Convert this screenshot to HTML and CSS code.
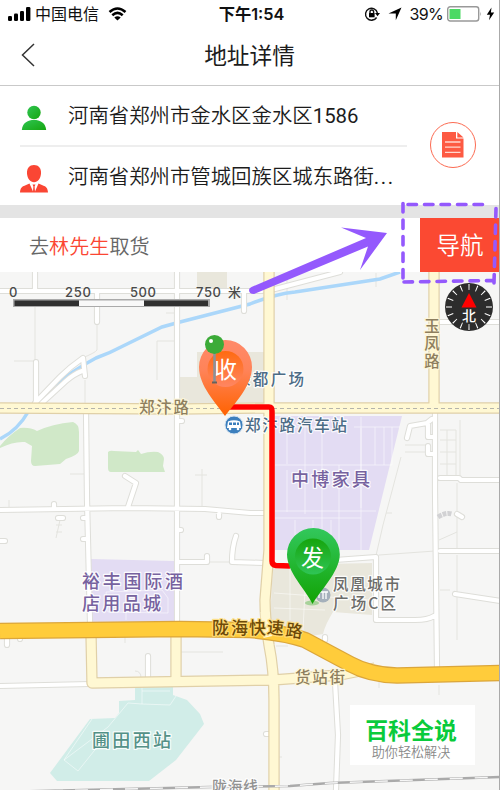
FILE: index.html
```html
<!DOCTYPE html>
<html lang="zh-CN">
<head>
    <meta charset="UTF-8">
    <meta name="viewport" content="width=device-width, initial-scale=1.0">
    <title>地址详情</title>
    <link rel="stylesheet" href="styles.css">
</head>
<body>
    <div class="page">
        <div class="status-bar">
            <div class="status-left">
                <svg class="signal" width="23" height="14" viewBox="0 0 23 14">
                    <rect x="0" y="9" width="4" height="5" rx="1.3"/>
                    <rect x="6" y="6.500" width="4" height="7.500" rx="1.300"/>
                    <rect x="12" y="4" width="4" height="10" rx="1.300"/>
                    <rect x="18" y="0" width="4.400" height="14" rx="1.300"/>
                </svg>
                <span class="carrier">中国电信</span>
                <svg class="wifi" width="19" height="14" viewBox="0 0 19 14">
                    <path d="M1.500 5Q9.500-2 17.500 5M4.300 8.200Q9.500 3.700 14.700 8.200"/>
                    <path class="wifi-dot" d="M6.300 10.400Q9.500 7.900 12.700 10.400L9.500 13.600Z"/>
                </svg>
            </div>
            <div class="status-time">下午1:54</div>
            <div class="status-right">
                <svg width="17" height="16" viewBox="0 0 17 16">
                    <path class="lock-ring" d="M12.600 11.500A6 6 0 1 1 13.400 7M8 14A6 6 0 0 0 11 13"/>
                    <path d="M11 7h5l-2.500 3.200z"/>
                    <rect x="5" y="7" width="5.600" height="4.300"/>
                    <path class="lock-ring" d="M6 7.500V5.800a1.800 1.800 0 0 1 3.600 0V7.500"/>
                </svg>
                <svg class="location" width="14" height="14" viewBox="0 0 14 14">
                    <path d="M13.500.5L7.800 13.200V6.500H.5Z"/>
                </svg>
                <span class="percent">39%</span>
                <svg class="battery" width="36" height="16" viewBox="0 0 36 16">
                    <rect class="battery-case" x=".7" y=".7" width="31" height="14.300" rx="2.500"/>
                    <rect class="battery-level" x="2.500" y="3" width="11" height="10"/>
                    <path class="battery-tip" d="M33.300 5.500q1.500 2.300 0 4.800z"/>
                </svg>
                <svg class="bolt" width="9" height="14" viewBox="0 0 9 14">
                    <path d="M5.500.5L.8 7.800H4L3 13.300L8.200 5.600H4.900Z"/>
                </svg>
            </div>
        </div>

        <div class="navbar">
            <svg class="back" width="14" height="24" viewBox="0 0 14 24">
                <path d="M13 1L1.500 12L13 23"/>
            </svg>
            <h1 class="navbar-title">地址详情</h1>
        </div>

        <div class="address">
            <div class="address-list">
                <div class="address-row">
                    <svg class="person" width="28" height="28" viewBox="0 0 28 28">
                        <defs>
                            <linearGradient id="personGreen" x1="0" y1="0" x2="1" y2="1">
                                <stop offset="0" stop-color="#2fc552"/>
                                <stop offset="1" stop-color="#16a610"/>
                            </linearGradient>
                        </defs>
                        <circle cx="14" cy="8.500" r="6.700" fill="url(#personGreen)"/>
                        <path d="M1.800 26C2.500 18.500 8 16 14 16S25.500 18.500 26.200 26Z" fill="url(#personGreen)"/>
                    </svg>
                    <span class="address-text">河南省郑州市金水区金水区<span class="digits">1586</span></span>
                </div>
                <div class="address-row">
                    <svg class="person" width="28" height="28" viewBox="0 0 28 28">
                        <path class="red" d="M14 0C18.500 0 21.300 3 21 8.500C20.700 13.500 17.800 17.200 14 17.200S7.300 13.500 7 8.500C6.700 3 9.500 0 14 0Z"/>
                        <path class="red" d="M0 27.500C.3 23 2 21.300 5 20.400L9.500 18.500L13 26.500L13.400 21.500L12.500 19.500H15.500L14.600 21.500L15 26.500L18.500 18.500L23 20.400C26 21.300 27.700 23 28 27.500Z"/>
                    </svg>
                    <span class="address-text">河南省郑州市管城回族区城东路街<span class="dots">...</span></span>
                </div>
            </div>
            <div class="order-button">
                <svg width="22" height="26" viewBox="0 0 22 26">
                    <path class="sheet" d="M0 0H14V6.500H21.500V25.500H0Z"/>
                    <path class="sheet" d="M15.300 0L21.500 5.500H15.300Z"/>
                    <path class="sheet-lines" d="M3 10H18.500M3 15.200H18.500M3 20.400H18.500"/>
                </svg>
            </div>
        </div>

        <div class="task">
            <p class="task-text">去<span class="task-name">林先生</span>取货</p>
            <div class="nav-button">导航</div>
        </div>

        <div class="map">
            <svg class="map-canvas" width="500" height="518" viewBox="0 272 500 518">
                <defs>
                    <path id="lanes" d="M0 291H262M35 272V291M97 291V322M177 272V622M36 362V402M35 403L60 377Q70 367 83 358L85 376M42 403L66 381Q74 374 82 371M244 292V311M86 410L87 500L90 622M0 510L128 508L205 509L250 513H266M54 509V504M125 476L136 483L128 507M0 541H5M58 518H63M83 518H87M83 539H87M178 421H182M178 530H181M178 562H207V556M236 536Q232 547 232 562L265 563M219 514V517M435 413V490L437 668M440 478L459 478L461 480H500M440 551H500M407 438L410 426L427 423L432 419M428 424V437H433M428 446V454H434M455 594L500 601M335 560L376 557V620H415Q428 620 434 616M148 656V680M335 682L338 735L336 790M440 322H500M7 637V645M20 637V639M325 640V637M266 734H275M0 686L90 684M275 289L340 272"/>
                    <path id="yellow" d="M269 272V550L265 600Q265 620 269 645Q274 670 274 700V790M434 272V405M0 408L180 409L265 408H500M91 634L92 683L273 680L340 675L375 668M176 632V681"/>
                    <path id="highway" d="M0 631L180 629L250 630Q285 633 305 640L350 664Q370 675 397 675.500L500 673"/>
                    <linearGradient id="pinOrange" x1="0" y1="0" x2="0" y2="1">
                        <stop offset="0" stop-color="#ff8a6a"/>
                        <stop offset=".4" stop-color="#ff8358"/>
                        <stop offset="1" stop-color="#ff6200"/>
                    </linearGradient>
                    <linearGradient id="pinOrangeInner" x1="0" y1="0" x2="0" y2="1">
                        <stop offset="0" stop-color="#ff6a10"/>
                        <stop offset="1" stop-color="#ff8663"/>
                    </linearGradient>
                    <linearGradient id="pinGreen" x1="0" y1="0" x2="0" y2="1">
                        <stop offset="0" stop-color="#32c85c"/>
                        <stop offset="1" stop-color="#12a304"/>
                    </linearGradient>
                    <linearGradient id="pinGreenInner" x1="0" y1="0" x2="0" y2="1">
                        <stop offset="0" stop-color="#16a40c"/>
                        <stop offset="1" stop-color="#2fc556"/>
                    </linearGradient>
                </defs>

                <rect class="land" y="272" width="500" height="518"/>

                <!-- blocks -->
                <path class="block" d="M197 272H227V288H197ZM197 352H264V404H180V377H197ZM273 565L372 563V615L333 612Q325 625 323 634L305 637L270 620Z"/>
                <path class="park" d="M0 446Q8 436 20 428Q30 427 37 431Q52 424 73 422Q79 424 79 432V451Q78 455 66 459L60 464L35 466Q31 466 31 461L32 446L25 442Q14 441 0 448ZM108 452Q110 450 114 451L136 452L138 450L141 454Q150 451 158 452Q164 455 164 459L163 466L165 472H111Q108 472 108 468Z"/>
                <path class="mall" d="M275 416H402L369 550H275ZM91 559L174 561V622H92Z"/>
                <path class="station" d="M135 686H173V695L187 700L200 714L204 724L176 760L149 781H57L50 773L90 719L115 718L119 713V701L135 700Z"/>

                <!-- small lanes and block outlines -->
                <path class="mall-lines" d="M275 427H325M354 427H400M275 465H392M275 511H376M288 518H361M275 518L288 518M287 417V464M305 417V514M322 417V550M339 465V550M361 417V508M375 427V465M384 427V465M392 427V465M361 428V550M287 470V512M295 520V550M313 520V550M331 520V550M106 592L162 590L168 598V613L108 612ZM126 595V620M142 686V704L170 705L176 696M142 691H170M142 704L128 703L108 727L64 760L78 771L102 741M64 760L92 719M274 593L370 600M274 608L325 610M306 570L303 630M290 567V620"/>
                <path class="thin" d="M35 300V360M14 361H34M97 325V350Q95 353 82 358M157 341H177M157 341V380M85 380V405M70 474H84M202 469V507M195 475H207M60 520L56 538M56 525H62M56 532H62M9 500V509M401 457L383 525L375 560M379 555L435 551M405 452H430M405 445H430M440 430H456V476M447 430V476M440 440H456M440 452H456M440 464H456M460 420V478M457 483V551M439 540L457 532M457 555V640M440 590H450M181 652H223M135 671Q141 671 141 678M125 634V643M287 276V300M376 273V287M166 313H176M209 562H232M386 513H392M439 685V695M379 677V688M282 757H278M276 646H288"/>

                <path class="river" d="M0 439Q18 430 28 412L48 390Q75 369 96 358Q110 353 121 347L162 327L180 322L250 304Q275 294 295 292L380 279L400 272"/>

                <!-- roads: edge first, then surface -->
                <use href="#lanes" class="lane-edge"/>
                <use href="#lanes" class="lane"/>
                <use href="#yellow" class="yellow-edge"/>
                <use href="#yellow" class="yellow-road"/>
                <path class="yellow-dash" d="M0 408.500H500"/>
                <use href="#highway" class="highway-edge"/>
                <use href="#highway" class="highway"/>
                <path class="yellow-road" d="M265 612Q265 622 268 637"/>
                <path class="lane-dotted" d="M438 517Q446 512 452 514"/>
                <path class="lane-edge" d="M457 514L462 517"/>
                <path class="lane" d="M457 514L462 517"/>
                <path class="rail" d="M0 792L210 787L290 786L330 783L500 777"/>
                <path class="rail-dash" d="M0 792L210 787L290 786L330 783L500 777"/>

                <!-- labels -->
                <text class="label road-label" x="139" y="413" textLength="50">郑汴路</text>
                <text class="label road-label vertical" x="432" y="318" textLength="51">玉凤路</text>
                <text class="label road-label" x="295" y="683" textLength="50">货站街</text>
                <text class="label highway-label" x="212" y="633.500">陇</text>
                <text class="label highway-label" x="231" y="633.500">海</text>
                <text class="label highway-label" x="249" y="634">快</text>
                <text class="label highway-label" x="267" y="634" transform="rotate(5 275 628)">速</text>
                <text class="label highway-label" x="286" y="637" transform="rotate(8 294 630)">路</text>
                <text class="label place-label" x="235" y="385" textLength="69">绿都广场</text>
                <text class="label place-label" x="245" y="430.500" textLength="102">郑汴路汽车站</text>
                <text class="label mall-label" x="291" y="485.500" textLength="79">中博家具</text>
                <text class="label mall-label" x="82" y="587.500" textLength="101">裕丰国际酒</text>
                <text class="label mall-label" x="82" y="609.500" textLength="79">店用品城</text>
                <text class="label station-label" x="92" y="746.500" textLength="79">圃田西站</text>
                <text class="label city-label" x="333" y="590" textLength="67">凤凰城市</text>
                <text class="label city-label" x="333" y="609" textLength="63">广场C区</text>
                <text class="label rail-label" x="212" y="792" textLength="46">陇海线</text>

                <!-- route -->
                <path class="route" d="M227 407H269Q272 407 272 411V561Q272 565 276 565.500L290 566"/>

                <!-- bus stop -->
                <circle class="bus" cx="234" cy="425" r="9"/>
                <path class="bus-body" d="M228 421.500Q234 419 240 421.500L241 428H227Z"/>
                <path class="bus-window" d="M229 422.500H232V425H229ZM233 422.500H236V425H233ZM237 422.500H239V425H237Z"/>
                <circle class="bus-body" cx="230" cy="429" r="1.300"/>
                <circle class="bus-body" cx="238" cy="429" r="1.300"/>

                <!-- receive pin -->
                <path d="M225 416C216 403 199 386 199 367A26.500 27 0 0 1 252 367C252 386 234 404 225 416Z" fill="url(#pinOrange)"/>
                <circle cx="225.500" cy="369" r="18" fill="url(#pinOrangeInner)"/>
                <text class="pin-text" x="214" y="378">收</text>
                <path class="needle" d="M214.500 350V382"/>
                <path class="needle-tip" d="M212 382.500H217"/>
                <circle class="needle-head" cx="214.500" cy="344.500" r="9.500"/>
                <circle class="needle-shine" cx="211" cy="341" r="2"/>

                <!-- send pin -->
                <circle class="mall-icon" cx="323" cy="595" r="7.500"/>
                <path class="mall-icon-lines" d="M319 598V593M323 599V592M326 599V592M320 592H328"/>
                <ellipse class="pin-shadow" cx="312" cy="603" rx="7" ry="2.500"/>
                <path d="M312.500 604C306 590 287 572 287 554.500A26.300 26.500 0 0 1 339.800 554.500C339.800 572 319 592 312.500 604Z" fill="url(#pinGreen)"/>
                <circle cx="313" cy="556.500" r="18" fill="url(#pinGreenInner)"/>
                <text class="pin-text" x="301" y="565.500">发</text>

                <!-- scale -->
                <text class="scale-text" x="9" y="297">0</text>
                <text class="scale-text" x="65" y="297" textLength="26">250</text>
                <text class="scale-text" x="130" y="297" textLength="26">500</text>
                <text class="scale-text" x="196" y="297" textLength="25">750</text>
                <text class="scale-text" x="228" y="297">米</text>
                <rect class="scale-edge" x="13" y="299" width="197" height="8"/>
                <path class="scale-bar" d="M14.500 300.500H79V306H14.500ZM144 300.500H208V306H144Z"/>
                <path class="scale-gap" d="M79 300.500H144V306H79Z"/>

                <!-- compass -->
                <circle class="compass" cx="469" cy="307" r="24"/>
                <circle class="compass-ticks" cx="469" cy="307" r="20" pathLength="160"/>
                <path class="compass-needle" d="M469 293L476.500 307.500H461.500Z"/>
                <text class="compass-text" x="462" y="321">北</text>
            </svg>
            <div class="brand">
                <strong class="brand-name">百科全说</strong>
                <span class="brand-slogan">助你轻松解决</span>
            </div>
        </div>

        <!-- hint arrow and frame around the navigation button -->
        <svg class="hint" width="500" height="790" viewBox="0 0 500 790">
            <path class="hint-arrow" d="M251.500 287L366 238L341 227.500L387 233L360 270L368 246.500L254 294Q249 294 249 290Q249 288 251.500 287Z"/>
            <path class="hint-frame" d="M408 204.500H490M403 203.500V282M404 282L493 280.500M496 208.500L494 283"/>
        </svg>
    </div>
</body>
</html>
```
FILE: styles.css
```css
body {
    margin: 0;
    background-color: #fff;
    color: #1c1c1c;
    font-family: 'Noto Sans CJK SC', sans-serif;
}

.page {
    position: relative;
    width: 500px;
    height: 790px;
    overflow: hidden;
    background-color: #fff;
}
.page::after {
    content: '';
    position: absolute;
    top: 0;
    right: 0;
    width: 1px;
    height: 100%;
    background-color: #aaa;
}

/* status bar */
.status-bar {
    display: grid;
    grid-template-columns: 1fr auto 1fr;
    align-items: center;
    height: 28px;
    padding: 0 5px 0 8px;
    box-sizing: border-box;
    color: #111;
}
.status-left,
.status-right {
    display: flex;
    align-items: center;
}
.status-right {
    justify-content: flex-end;
}
.carrier {
    margin: -2px 9px 0 4px;
    font-size: 16px;
    line-height: 26px;
}
.wifi path {
    fill: none;
    stroke: #000;
    stroke-width: 2.6;
}
.wifi .wifi-dot {
    fill: #000;
    stroke: none;
}
.status-time {
    font-family: Inter, 'Noto Sans CJK SC', sans-serif;
    font-size: 16.3px;
    font-weight: 600;
    line-height: 26px;
}
.lock-ring {
    fill: none;
    stroke: #111;
    stroke-width: 1.4;
}
.location {
    margin-left: 7px;
}
.percent {
    margin: 0 4px 0 8px;
    font-family: Inter, sans-serif;
    font-size: 16px;
    letter-spacing: -.7px;
}
.battery-case {
    fill: #fff;
    stroke: #999;
    stroke-width: 1.4;
}
.battery-level {
    fill: #4cd964;
}
.battery-tip {
    fill: #999;
}
.bolt {
    margin-left: 3px;
}

/* title */
.navbar {
    display: flex;
    align-items: center;
    height: 58px;
    padding: 0 21px;
    box-sizing: border-box;
    border-bottom: 1px solid #c9c9c9;
}
.back {
    margin-top: -3px;
    fill: none;
    stroke: #333;
    stroke-width: 1.5;
}
.navbar-title {
    flex: 1;
    margin: -4px 15px 0 0;
    font-size: 22.7px;
    font-weight: 400;
    line-height: 52px;
    text-align: center;
}

/* addresses */
.address {
    display: flex;
    height: 119px;
    border-bottom: 13px solid #e4e4e4;
}
.address-list {
    width: 387px;
    margin-left: 20px;
}
.address-row {
    display: flex;
    align-items: center;
    gap: 20px;
    height: 59px;
    font-size: 20.4px;
    font-weight: 350;
    white-space: nowrap;
}
.address-row + .address-row {
    border-top: 2px solid #eee;
}
.address-text {
    margin-top: -3px;
}
.digits {
    font-family: Roboto, sans-serif;
    font-weight: 400;
}
.dots {
    font-family: Roboto, sans-serif;
    font-weight: 400;
    letter-spacing: 1.6px;
}
.person {
    flex: none;
    margin-top: 5px;
}
.red {
    fill: #fa4634;
}
.order-button {
    display: flex;
    align-items: center;
    justify-content: center;
    width: 44px;
    height: 44px;
    margin: 36px 0 0 23px;
    border: 1px solid #fc6b52;
    border-radius: 50%;
}
.sheet {
    fill: #fd5a43;
}
.sheet-lines {
    fill: none;
    stroke: #ffd8d0;
    stroke-width: 1.3;
}

/* task */
.task {
    display: flex;
    justify-content: space-between;
    height: 54px;
    padding-left: 29px;
}
.task-text {
    margin: 0;
    color: #666;
    font-size: 20.1px;
    font-weight: 350;
    line-height: 55px;
}
.task-name {
    color: #fb4632;
}
.nav-button {
    width: 80px;
    background-color: #fb4932;
    color: #fff;
    font-size: 23.5px;
    font-weight: 350;
    line-height: 53px;
    text-align: center;
}

/* map */
.map {
    position: relative;
    height: 518px;
}
.map-canvas {
    display: block;
}
.land {
    fill: #f6f6f5;
}
.block {
    fill: #e9e7dc;
}
.park {
    fill: #d0e8c8;
}
.mall {
    fill: #e3dcf3;
}
.station {
    fill: #d1ede8;
}
.mall-lines {
    fill: none;
    stroke: #fff;
    stroke-opacity: .5;
}
.thin {
    fill: none;
    stroke: #e4e4df;
}
.river {
    fill: none;
    stroke: #abd7fa;
    stroke-width: 3.5;
}
.lane-edge,
.lane,
.yellow-edge,
.yellow-road,
.highway-edge,
.highway {
    fill: none;
    stroke-linejoin: round;
}
.lane-edge {
    stroke: #deded9;
    stroke-width: 6.2;
    stroke-linecap: round;
}
.lane {
    stroke: #fff;
    stroke-width: 4.2;
    stroke-linecap: round;
}
.yellow-edge {
    stroke: #e0d0a8;
    stroke-width: 11.4;
}
.yellow-road {
    stroke: #fff8d3;
    stroke-width: 9;
}
.yellow-dash {
    fill: none;
    stroke: #b5b4ab;
    stroke-dasharray: 4 3;
}
.highway-edge {
    stroke: #dba63b;
    stroke-width: 16.5;
}
.highway {
    stroke: #ffcc3b;
    stroke-width: 14;
}
.lane-dotted {
    fill: none;
    stroke: #d2d2d4;
    stroke-width: 5;
    stroke-dasharray: 4 1;
}
.rail {
    fill: none;
    stroke: #aaa;
    stroke-width: 2.6;
}
.rail-dash {
    fill: none;
    stroke: #f6f6f6;
    stroke-width: 1.4;
    stroke-dasharray: 13 12;
}
.label {
    font-weight: 500;
    stroke: #fff;
    stroke-opacity: .85;
    stroke-width: 2.5px;
    stroke-linejoin: round;
    paint-order: stroke;
}
.road-label {
    fill: #8e7f5e;
    stroke: #fff8d8;
    font-size: 15.5px;
}
.vertical {
    writing-mode: vertical-rl;
}
.highway-label {
    fill: #6d4a08;
    stroke: #ffdc78;
    font-size: 17px;
}
.place-label {
    fill: #4c6c86;
    font-size: 15.5px;
}
.mall-label {
    fill: #77629f;
    font-size: 18px;
}
.station-label {
    fill: #549187;
    font-size: 18px;
}
.city-label {
    fill: #6c6c6a;
    font-size: 15.5px;
}
.rail-label {
    fill: #929292;
    font-size: 15px;
}
.route {
    fill: none;
    stroke: #f00;
    stroke-width: 5.5;
}
.bus {
    fill: #3c7fbd;
    stroke: #d2e2ef;
}
.bus-body {
    fill: #fff;
}
.bus-window {
    fill: #3c7fbd;
}
.pin-text {
    fill: #fff;
    font-size: 23px;
}
.needle {
    stroke: #8a9399;
    stroke-width: 2.5;
}
.needle-tip {
    stroke: #66625c;
    stroke-width: 2;
}
.needle-head {
    fill: #3cab38;
}
.needle-shine {
    fill: #fff;
}
.mall-icon {
    fill: #a5b0bb;
}
.mall-icon-lines {
    fill: none;
    stroke: #fff;
    stroke-width: 1.3;
}
.pin-shadow {
    fill: #12a304;
    fill-opacity: .3;
}
.scale-text {
    fill: #4a4a4a;
    font-family: Inter, 'Noto Sans CJK SC', sans-serif;
    font-size: 13px;
    font-weight: 500;
}
.scale-edge {
    fill: #aaa;
}
.scale-bar {
    fill: #303030;
}
.scale-gap {
    fill: #f8f8f8;
}
.compass {
    fill: #2c2c2c;
}
.compass-ticks {
    fill: none;
    stroke: #fff;
    stroke-width: 6;
    stroke-dasharray: 1.3 8.7;
    stroke-dashoffset: .65;
}
.compass-needle {
    fill: #f00;
}
.compass-text {
    fill: #fff;
    font-size: 14px;
    font-weight: 500;
}

.brand {
    position: absolute;
    left: 350px;
    top: 433px;
    display: flex;
    flex-direction: column;
    align-items: center;
    width: 125px;
    height: 60px;
    padding: 8px 3px 0 0;
    box-sizing: border-box;
    background-color: #fff;
}
.brand-name {
    color: #09cb3b;
    font-size: 22.9px;
    line-height: 32px;
}
.brand-slogan {
    color: #888;
    font-size: 13.1px;
    font-weight: 350;
    line-height: 13px;
}

/* hint drawn over the page */
.hint {
    position: absolute;
    left: 0;
    top: 0;
    pointer-events: none;
}
.hint-arrow {
    fill: #9459fd;
}
.hint-frame {
    fill: none;
    stroke: #9459fd;
    stroke-width: 3.6;
    stroke-dasharray: 8.5 8;
    stroke-linecap: round;
}
```
